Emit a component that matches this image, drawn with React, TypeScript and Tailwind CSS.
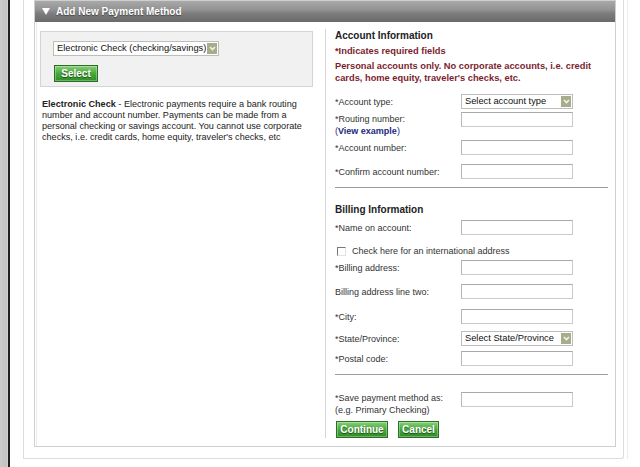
import type { ReactNode } from 'react'

const labelCls = 'w-[126px] shrink-0 text-[9px] leading-[12px] text-[#333]'
const greenBtn =
  'h-[17px] border border-[#2b7024] bg-[linear-gradient(to_bottom,#86d076,#47a93c_50%,#2f8e27)] text-[10px] font-bold leading-none text-white [text-shadow:0_1px_1px_rgba(0,0,0,0.55)] shadow-[inset_0_0_0_1px_rgba(255,255,255,0.3)]'

function TextBox() {
  return (
    <div className="h-[15px] w-[112px] border border-[#cacaca] border-t-[#a9a9a9] border-l-[#b6b6b6] bg-white" />
  )
}

function FakeSelect({ text, wide }: { text: string; wide?: boolean }) {
  return (
    <div
      className={`flex h-[15px] items-stretch border border-[#bdbdbd] bg-white ${
        wide ? 'w-[166px]' : 'w-[112px]'
      }`}
    >
      <span className="flex-1 overflow-hidden whitespace-nowrap pl-[3px] text-[9.3px] leading-[13px] text-[#111]">
        {text}
      </span>
      <span className="m-[1px] flex w-[10px] shrink-0 items-center justify-center bg-[#a7ad8b]">
        <svg width="7" height="5" viewBox="0 0 7 5">
          <path d="M1 1 L3.5 3.6 L6 1" fill="none" stroke="#f2f4e8" strokeWidth="1.5" />
        </svg>
      </span>
    </div>
  )
}

function Row({ label, children, className = '' }: { label: ReactNode; children: ReactNode; className?: string }) {
  return (
    <div className={`flex items-center ${className}`}>
      <div className={labelCls}>{label}</div>
      {children}
    </div>
  )
}

export default function App() {
  return (
    <div className="flex h-[467px] w-[640px] overflow-hidden bg-white font-['Liberation_Sans',Arial,sans-serif]">
      <div className="h-full w-[8px] bg-[linear-gradient(to_right,#c9c9c9,#c2c2c2_80%,#d4d4d4)]" />
      <div className="h-full w-[2px] bg-[#1e1e1e]" />

      <div className="ml-[13px] h-[459px] w-[601px] rounded-br-[3px] border-x border-b border-[#dcdcdc] pl-[10px] pr-[7px] pb-[11px]">
        <div className="flex h-[447px] w-[582px] flex-col border border-[#cfcfcf]">
          <div className="flex h-[22px] items-center gap-[6px] bg-[linear-gradient(to_bottom,#a9a9a9,#939393_40%,#7c7c7c_60%,#6a6a6a)] pl-[7px]">
            <svg width="8" height="7" viewBox="0 0 8 7">
              <polygon points="0,0 8,0 4,7" fill="#fff" />
            </svg>
            <span className="text-[10px] font-bold text-white [text-shadow:0_1px_1px_rgba(0,0,0,0.45)]">
              Add New Payment Method
            </span>
          </div>

          <div className="flex flex-1">
            <div className="ml-[1px] w-[289px] border-l border-[#ececec] pl-[3px] pt-[9px]">
              <div className="h-[56px] w-[273px] border border-[#d4d4d4] bg-[#f1f1f1] pl-[12px] pt-[9px]">
                <FakeSelect text="Electronic Check (checking/savings)" wide />
                <button type="button" className={`ml-[1px] mt-[9px] w-[44px] ${greenBtn}`}>
                  Select
                </button>
              </div>
              <p className="mt-[12px] w-[272px] pl-[2px] text-[9.1px] leading-[11px] text-[#222]">
                <b>Electronic Check</b> - Electronic payments require a bank routing number and account
                number. Payments can be made from a personal checking or savings account. You cannot use
                corporate checks, i.e. credit cards, home equity, traveler's checks, etc
              </p>
            </div>

            <div className="mb-[8px] mt-[7px] flex-1 border-l border-[#d6d6d6] pl-[9px] pt-[1px]">
              <h3 className="text-[10px] font-bold leading-[12px] text-[#222]">Account Information</h3>
              <p className="mt-[3px] text-[9.3px] font-bold leading-[12px] text-[#7b1e2e]">
                *Indicates required fields
              </p>
              <p className="mt-[3px] w-[270px] text-[9.3px] font-bold leading-[12px] text-[#7b1e2e]">
                Personal accounts only. No corporate accounts, i.e. credit cards, home equity, traveler's
                checks, etc.
              </p>

              <Row label="*Account type:" className="mt-[10px]">
                <FakeSelect text="Select account type" />
              </Row>
              <div className="mt-[3px] flex items-start">
                <div className={`${labelCls} pt-[1px]`}>
                  *Routing number:
                  <br />
                  <span className="text-[#1b2a7c]">
                    (<b>View example</b>)
                  </span>
                </div>
                <TextBox />
              </div>
              <Row label="*Account number:" className="mt-[3px]">
                <TextBox />
              </Row>
              <Row label="*Confirm account number:" className="mt-[9px]">
                <TextBox />
              </Row>

              <div className="mt-[8px] h-px w-[273px] bg-[#9c9c9c]" />

              <h3 className="mt-[16px] text-[10px] font-bold leading-[12px] text-[#222]">Billing Information</h3>
              <Row label="*Name on account:" className="mt-[4px]">
                <TextBox />
              </Row>
              <div className="ml-[2px] mt-[10px] flex items-center gap-[6px] text-[9px] leading-[12px] text-[#333]">
                <span className="h-[9px] w-[9px] border border-[#777] border-b-[#e2e2e2] border-r-[#e2e2e2] bg-white" />
                Check here for an international address
              </div>
              <Row label="*Billing address:" className="mt-[3px]">
                <TextBox />
              </Row>
              <Row label="Billing address line two:" className="mt-[9px]">
                <TextBox />
              </Row>
              <Row label="*City:" className="mt-[10px]">
                <TextBox />
              </Row>
              <Row label="*State/Province:" className="mt-[7px]">
                <FakeSelect text="Select State/Province" />
              </Row>
              <Row label="*Postal code:" className="mt-[5px]">
                <TextBox />
              </Row>

              <div className="mt-[8px] h-px w-[273px] bg-[#9c9c9c]" />

              <div className="mt-[17px] flex items-start">
                <div className={labelCls}>
                  *Save payment method as:
                  <br />
                  (e.g. Primary Checking)
                </div>
                <TextBox />
              </div>
              <div className="ml-[1px] mt-[5px] flex gap-[10px]">
                <button type="button" className={`w-[52px] ${greenBtn}`}>
                  Continue
                </button>
                <button type="button" className={`w-[41px] ${greenBtn}`}>
                  Cancel
                </button>
              </div>
            </div>
          </div>
        </div>
      </div>

      <div className="ml-[3px] h-[459px] w-px bg-[#ededed]" />
    </div>
  )
}
